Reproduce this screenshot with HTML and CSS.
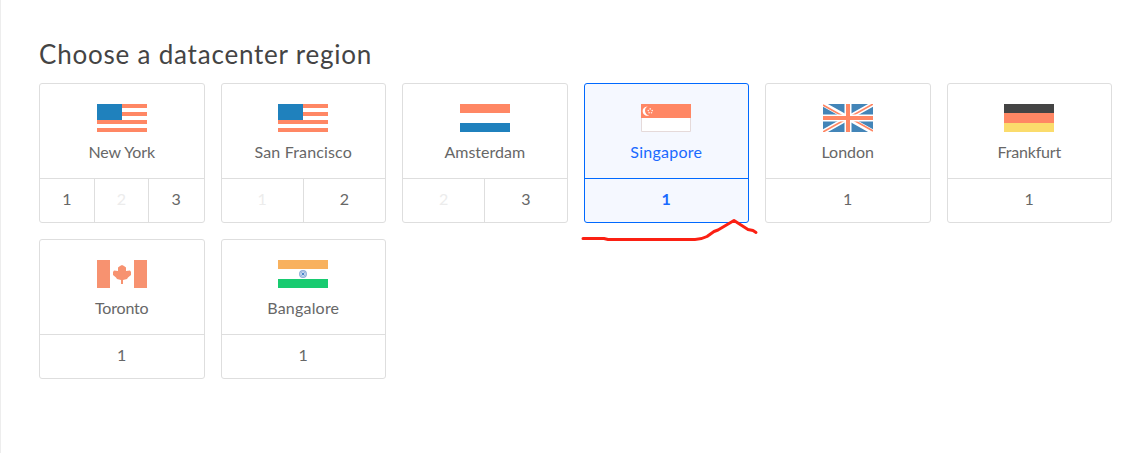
FILE: index.html
```html
<!DOCTYPE html>
<html lang="en">
<head>
<meta charset="utf-8">
<title>Choose a datacenter region</title>
<link rel="stylesheet" href="styles.css">
</head>
<body>
<main class="page">
  <h1 class="title">Choose a datacenter region</h1>
  <div class="regions">
    <section class="card">
      <div class="place">
        <svg class="flag" viewBox="0 0 50 28" shape-rendering="crispEdges"><path fill="#ff8764" d="M0 0h50v4H0zM0 8h50v4H0zM0 16h50v4H0zM0 24h50v4H0z"/><path fill="#1f81bd" d="M0 0h25v16H0z"/></svg>
        <span class="name new-york">New York</span>
      </div>
      <div class="slots thirds"><span class="slot">1</span><span class="slot off">2</span><span class="slot">3</span></div>
    </section>
    <section class="card">
      <div class="place">
        <svg class="flag" viewBox="0 0 50 28" shape-rendering="crispEdges"><path fill="#ff8764" d="M0 0h50v4H0zM0 8h50v4H0zM0 16h50v4H0zM0 24h50v4H0z"/><path fill="#1f81bd" d="M0 0h25v16H0z"/></svg>
        <span class="name san-francisco">San Francisco</span>
      </div>
      <div class="slots"><span class="slot off">1</span><span class="slot">2</span></div>
    </section>
    <section class="card">
      <div class="place">
        <svg class="flag" viewBox="0 0 50 28" shape-rendering="crispEdges"><path fill="#ff8764" d="M0 0h50v9H0z"/><path fill="#1f81bd" d="M0 19h50v9H0z"/></svg>
        <span class="name">Amsterdam</span>
      </div>
      <div class="slots"><span class="slot off">2</span><span class="slot">3</span></div>
    </section>
    <section class="card selected">
      <div class="place">
        <svg class="flag" viewBox="0 0 50 28"><path fill="#fff" stroke="#e5dada" d="M.5.5h49v27H.5z"/><path fill="#ff8764" d="M0 0h50v14H0z"/><path fill="#fff" d="M6.600 2.400A4.700 4.700 0 1 0 8.200 11.400A4.800 4.800 0 0 1 6.600 2.400z"/><g fill="#fff" fill-opacity=".85"><circle cx="9.200" cy="4.900" r=".8"/><circle cx="7.300" cy="6.600" r=".8"/><circle cx="11.200" cy="6.600" r=".8"/><circle cx="8.100" cy="8.800" r=".8"/><circle cx="10.500" cy="8.800" r=".8"/></g></svg>
        <span class="name singapore">Singapore</span>
      </div>
      <div class="slots"><span class="slot">1</span></div>
      <svg class="scribble" viewBox="0 0 180 26"><path d="M3 20.500H24L28 21.500H115Q121 21.500 127 18.500L134 13.500L138 12L154 2.500L168 11.500L173 12.500L176 14.500"/></svg>
    </section>
    <section class="card">
      <div class="place">
        <svg class="flag" viewBox="0 0 50 28"><path fill="#4385b8" d="M0 0h50v28H0z"/><path stroke="#fff" stroke-width="4.800" d="M0 0l50 28M50 0L0 28"/><path stroke="#ff8764" stroke-width="1.600" d="M0 1l24 13.500M50 0L26 13.500M0 28l24-13.500M50 27L26 13.500"/><path fill="#fff" d="M21.500 0h7v28h-7zM0 10.500h50v7H0z"/><path fill="#ff8764" d="M23 0h4v28h-4zM0 12h50v4H0z"/></svg>
        <span class="name">London</span>
      </div>
      <div class="slots"><span class="slot">1</span></div>
    </section>
    <section class="card">
      <div class="place">
        <svg class="flag" viewBox="0 0 50 28" shape-rendering="crispEdges"><path fill="#444" d="M0 0h50v9H0z"/><path fill="#ff8764" d="M0 9h50v10H0z"/><path fill="#fbdc6c" d="M0 19h50v9H0z"/></svg>
        <span class="name frankfurt">Frankfurt</span>
      </div>
      <div class="slots"><span class="slot">1</span></div>
    </section>
    <section class="card">
      <div class="place">
        <svg class="flag" viewBox="0 0 50 28"><path fill="#f79270" d="M0 0h13v28H0zM37 0h13v28H37zM25 5l2 1 2 1.500V11l4-.5 1 1.500v3l-3 2.500-1 1.500-4 1v4h-2v-4l-4-1-1-1.500-3-2.500v-3l1-1.500 4 .5V7.500L23 6z"/></svg>
        <span class="name toronto">Toronto</span>
      </div>
      <div class="slots"><span class="slot">1</span></div>
    </section>
    <section class="card">
      <div class="place">
        <svg class="flag" viewBox="0 0 50 28"><path fill="#f8b15e" d="M0 0h50v9H0z"/><path fill="#18cb70" d="M0 19h50v9H0z"/><circle cx="25" cy="14" r="3.400" fill="#c3d5ef" stroke="#91afd8" stroke-width="1.100"/><path stroke="#8badd9" stroke-width=".8" d="M22.500 11.500l5 5M27.500 11.500l-5 5"/><circle cx="25" cy="14" r="1.100" fill="#397bc4"/></svg>
        <span class="name bangalore">Bangalore</span>
      </div>
      <div class="slots"><span class="slot">1</span></div>
    </section>
  </div>
</main>
</body>
</html>
```
FILE: styles.css
```css
* { box-sizing: border-box; }
body {
  margin: 0;
  background: #fff;
  color: #676767;
  font: 16px/24px Lato, "Open Sans", sans-serif;
}
.page {
  min-height: 453px;
  padding: 36px 29px 0 38px;
  border-left: 1px solid #ededed;
}
.title {
  margin: 0 0 11px;
  color: #444;
  font-size: 26px;
  font-weight: 400;
  line-height: 36px;
  letter-spacing: .79px;
  white-space: nowrap;
}
.regions {
  display: grid;
  grid-template-columns: repeat(6, 1fr);
  gap: 16px;
}
.card {
  position: relative;
  height: 140px;
  border: 1px solid #dedede;
  border-radius: 3px;
}
.place {
  display: flex;
  flex-direction: column;
  align-items: center;
  gap: 8px;
  height: 94px;
  padding-top: 20px;
}
.flag {
  display: block;
  width: 50px;
  height: 28px;
}
.name { white-space: nowrap; }
.new-york { letter-spacing: -.1px; }
.san-francisco { letter-spacing: .15px; }
.singapore { letter-spacing: .25px; }
.frankfurt { letter-spacing: -.2px; }
.toronto { letter-spacing: -.2px; }
.bangalore { letter-spacing: .2px; }
.slots {
  display: flex;
  height: 44px;
  border-top: 1px solid #dedede;
}
.thirds {
  display: grid;
  grid-template-columns: 54px 54px 1fr;
}
.slot {
  flex: 1;
  line-height: 40px;
  text-align: center;
}
.slot + .slot { border-left: 1px solid #dedede; }
.off { color: #ececec; }
.selected {
  border-color: #0069ff;
  background: #f5f8ff;
  color: #1a6aff;
}
.selected .slots {
  border-color: #0069ff;
  font-weight: 700;
}
.scribble {
  position: absolute;
  left: -5px;
  top: 134px;
  width: 180px;
  height: 26px;
  fill: none;
  stroke: #fb2013;
  stroke-width: 3;
  stroke-linecap: round;
  stroke-linejoin: round;
}
```
